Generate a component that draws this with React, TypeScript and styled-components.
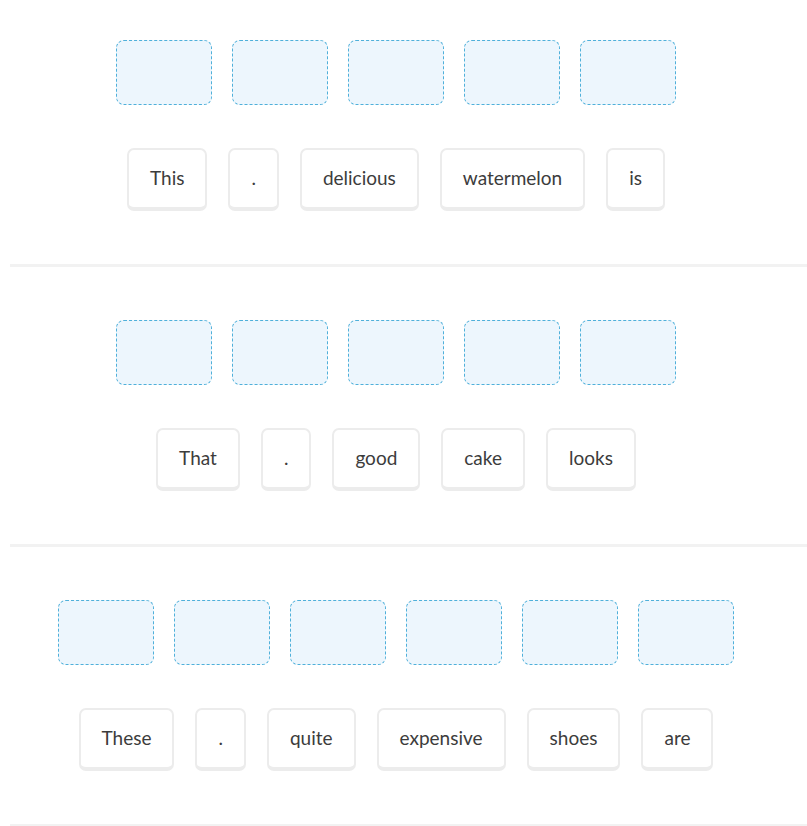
import React from 'react';
import styled, { createGlobalStyle } from 'styled-components';

const GlobalStyle = createGlobalStyle`
  html, body {
    margin: 0;
    padding: 0;
    background: #ffffff;
    overflow: hidden;
  }
  body {
    font-family: Lato, "Noto Sans", "Liberation Sans", sans-serif;
    color: #3c3c3c;
  }
`;

const Page = styled.div`
  padding-left: 10px;
  width: 797px;
`;

const Exercise = styled.section<{ $first?: boolean }>`
  display: flex;
  flex-direction: column;
  align-items: center;
  gap: 43px;
  padding: ${p => (p.$first ? '40px' : '53px')} 25px 53px 0;
  border-bottom: 3px solid #f2f2f2;
`;

const SlotRow = styled.div`
  display: flex;
  gap: 20px;
`;

const Slot = styled.div`
  width: 96px;
  height: 65px;
  box-sizing: border-box;
  border: 1px dashed #4fb0da;
  border-radius: 8px;
  background: #edf6fd;
`;

const WordRow = styled.div`
  display: flex;
  gap: 21px;
`;

const Word = styled.button`
  height: 63px;
  box-sizing: border-box;
  padding: 0 21px 2px;
  border: 2px solid #ececec;
  border-bottom-width: 4px;
  border-radius: 7px;
  background: #ffffff;
  font-family: Lato, "Noto Sans", "Liberation Sans", sans-serif;
  font-size: 19px;
  color: #3c3c3c;
  cursor: pointer;
`;

const exercises = [
  { slots: 5, words: ['This', '.', 'delicious', 'watermelon', 'is'] },
  { slots: 5, words: ['That', '.', 'good', 'cake', 'looks'] },
  { slots: 6, words: ['These', '.', 'quite', 'expensive', 'shoes', 'are'] },
];

export default function App() {
  return (
    <>
      <GlobalStyle />
      <Page>
        {exercises.map((ex, i) => (
          <Exercise key={i} $first={i === 0}>
            <SlotRow>
              {Array.from({ length: ex.slots }).map((_, j) => (
                <Slot key={j} />
              ))}
            </SlotRow>
            <WordRow>
              {ex.words.map((w, j) => (
                <Word key={j}>{w}</Word>
              ))}
            </WordRow>
          </Exercise>
        ))}
      </Page>
    </>
  );
}
